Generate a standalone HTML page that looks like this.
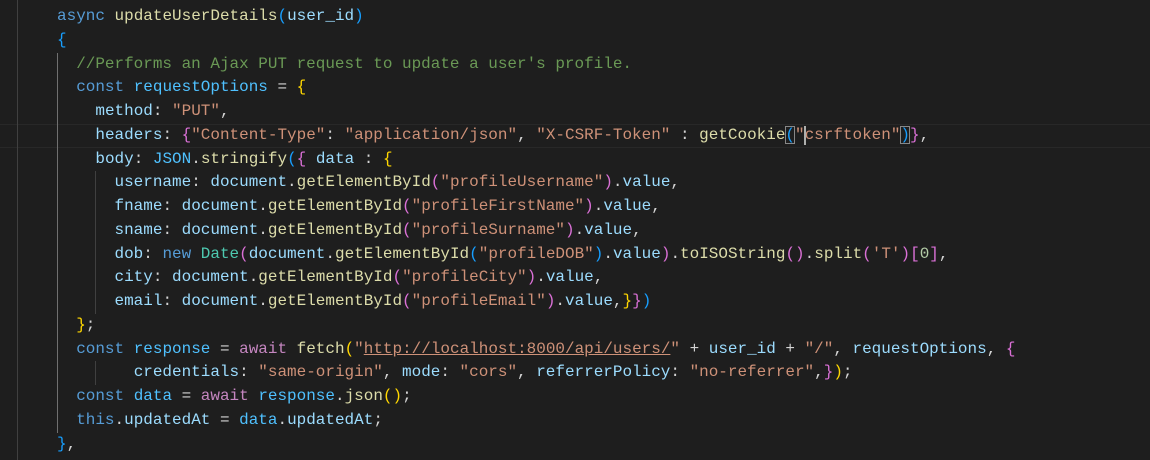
<!DOCTYPE html>
<html><head><meta charset="utf-8"><style>
html,body{margin:0;padding:0;background:#1e1e1e;width:1150px;height:460px;overflow:hidden}
#w{position:absolute;left:0;top:0;width:1150px;height:460px;background:#1e1e1e}
pre{position:absolute;left:18.7px;top:-18.75px;margin:0;font-family:"Liberation Mono",monospace;font-size:15.97px;line-height:23.75px;color:#d4d4d4;white-space:pre}
.k{color:#569cd6}.f{color:#dcdcaa}.v{color:#9cdcfe}.c{color:#4fc1ff}.s{color:#ce9178}.m{color:#6a9955}.t{color:#4ec9b0}.a{color:#c586c0}.n{color:#b5cea8}
.g{color:#ffd700}.p{color:#da70d6}.b{color:#179fff}
.u{text-decoration:underline}
.bx{outline:1px solid #888;outline-offset:-1px}
.hl{position:absolute;left:0;top:123.75px;width:1150px;height:22px;border-top:1px solid #282828;border-bottom:1px solid #282828}
.gd{position:absolute;width:1px;background:#404040}
.cur{position:absolute;left:804px;top:126px;width:2px;height:19px;background:#aeafad}
</style></head><body><div id="w">
<div class="hl"></div>
<div class="gd" style="left:17px;top:0;height:460px"></div>
<div class="gd" style="left:57px;top:53px;height:380px;background:#707070"></div>
<div class="gd" style="left:95px;top:171px;height:143px"></div>
<div class="gd" style="left:95px;top:361px;height:24px"></div>
<pre><span class="b">    },</span>
    <span class="k">async</span> <span class="f">updateUserDetails</span><span class="b">(</span><span class="v">user_id</span><span class="b">)</span>
    <span class="b">{</span>
      <span class="m">//Performs an Ajax PUT request to update a user's profile.</span>
      <span class="k">const</span> <span class="c">requestOptions</span> = <span class="g">{</span>
        <span class="v">method</span>: <span class="s">"PUT"</span>,
        <span class="v">headers</span>: <span class="p">{</span><span class="s">"Content-Type"</span>: <span class="s">"application/json"</span>, <span class="s">"X-CSRF-Token"</span> : <span class="f">getCookie</span><span class="b bx">(</span><span class="s">"csrftoken"</span><span class="b bx">)</span><span class="p">}</span>,
        <span class="v">body</span>: <span class="c">JSON</span>.<span class="f">stringify</span><span class="b">(</span><span class="p">{</span> <span class="v">data</span> : <span class="g">{</span>
          <span class="v">username</span>: <span class="v">document</span>.<span class="f">getElementById</span><span class="p">(</span><span class="s">"profileUsername"</span><span class="p">)</span>.<span class="v">value</span>,
          <span class="v">fname</span>: <span class="v">document</span>.<span class="f">getElementById</span><span class="p">(</span><span class="s">"profileFirstName"</span><span class="p">)</span>.<span class="v">value</span>,
          <span class="v">sname</span>: <span class="v">document</span>.<span class="f">getElementById</span><span class="p">(</span><span class="s">"profileSurname"</span><span class="p">)</span>.<span class="v">value</span>,
          <span class="v">dob</span>: <span class="k">new</span> <span class="t">Date</span><span class="p">(</span><span class="v">document</span>.<span class="f">getElementById</span><span class="b">(</span><span class="s">"profileDOB"</span><span class="b">)</span>.<span class="v">value</span><span class="p">)</span>.<span class="f">toISOString</span><span class="p">()</span>.<span class="f">split</span><span class="p">(</span><span class="s">'T'</span><span class="p">)</span><span class="p">[</span><span class="n">0</span><span class="p">]</span>,
          <span class="v">city</span>: <span class="v">document</span>.<span class="f">getElementById</span><span class="p">(</span><span class="s">"profileCity"</span><span class="p">)</span>.<span class="v">value</span>,
          <span class="v">email</span>: <span class="v">document</span>.<span class="f">getElementById</span><span class="p">(</span><span class="s">"profileEmail"</span><span class="p">)</span>.<span class="v">value</span>,<span class="g">}</span><span class="p">}</span><span class="b">)</span>
      <span class="g">}</span>;
      <span class="k">const</span> <span class="c">response</span> = <span class="a">await</span> <span class="f">fetch</span><span class="g">(</span><span class="s">"<span class="u">http://localhost:8000/api/users/</span>"</span> + <span class="v">user_id</span> + <span class="s">"/"</span>, <span class="v">requestOptions</span>, <span class="p">{</span>
            <span class="v">credentials</span>: <span class="s">"same-origin"</span>, <span class="v">mode</span>: <span class="s">"cors"</span>, <span class="v">referrerPolicy</span>: <span class="s">"no-referrer"</span>,<span class="p">}</span><span class="g">)</span>;
      <span class="k">const</span> <span class="c">data</span> = <span class="a">await</span> <span class="c">response</span>.<span class="f">json</span><span class="g">()</span>;
      <span class="k">this</span>.<span class="v">updatedAt</span> = <span class="c">data</span>.<span class="v">updatedAt</span>;
    <span class="b">}</span>,
</pre>
<div class="cur"></div>
</div></body></html>
